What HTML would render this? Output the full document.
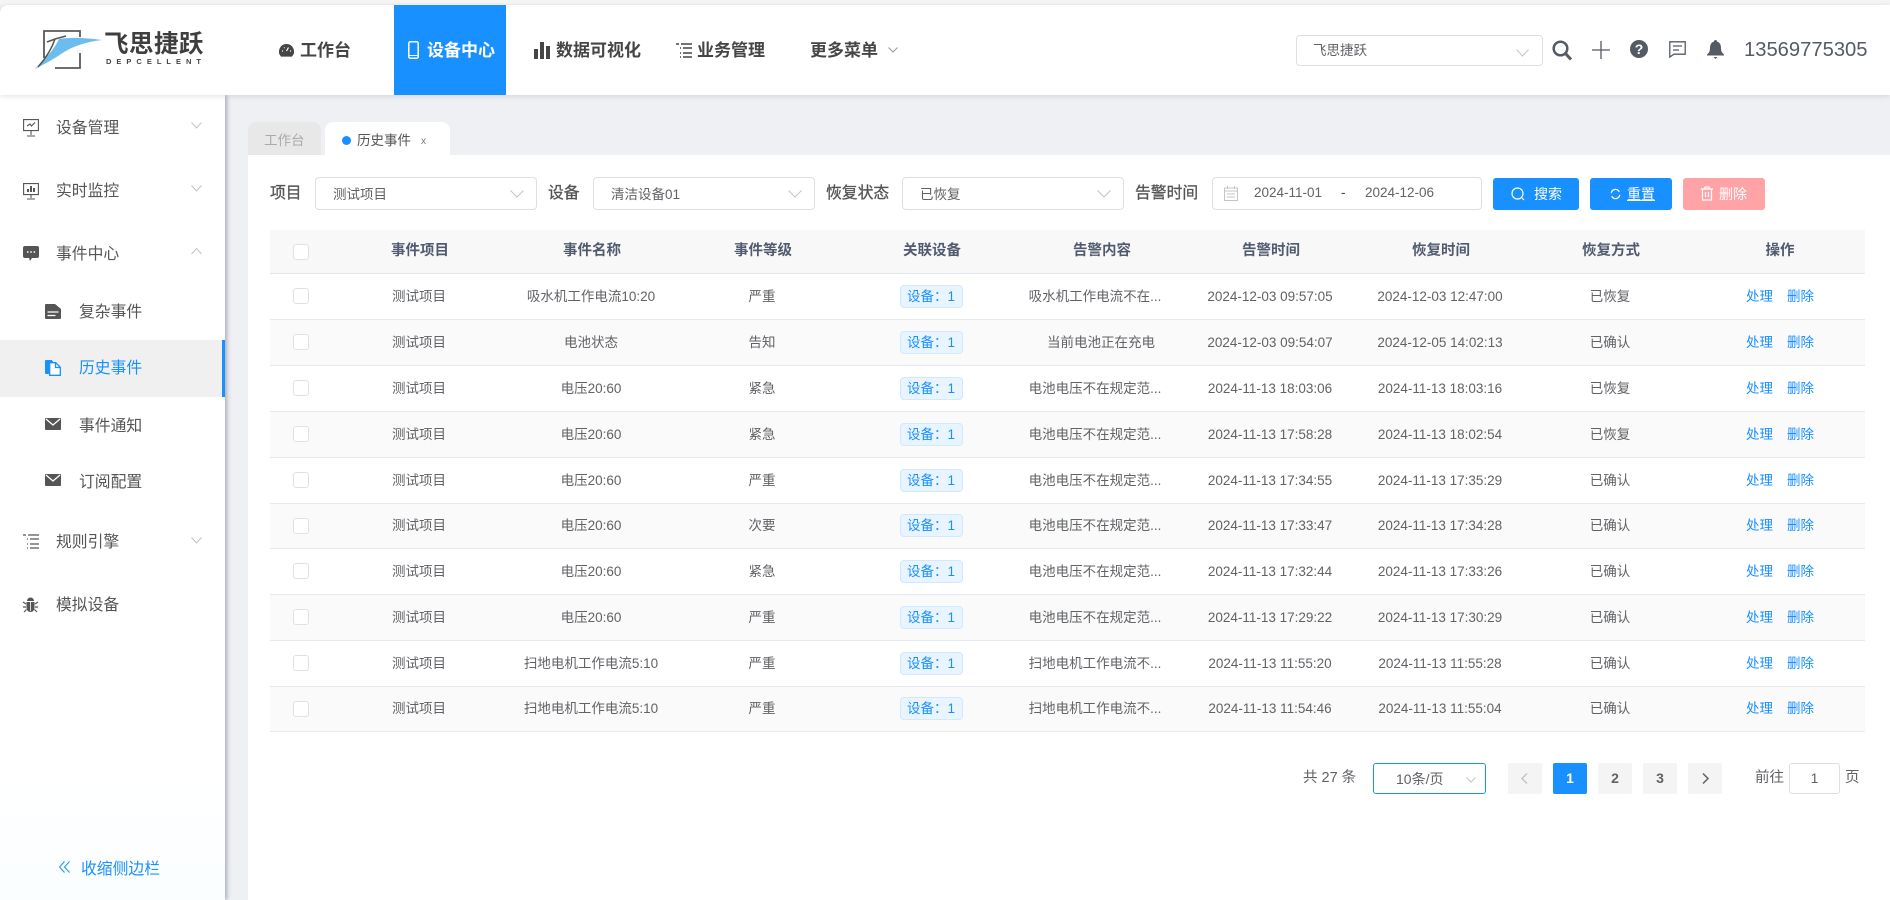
<!DOCTYPE html>
<html lang="zh"><head><meta charset="utf-8"><title>历史事件</title>
<style>
*{box-sizing:border-box}
html,body{margin:0;padding:0;width:1890px;height:900px;overflow:hidden;background:#eef0f4;font-family:"Liberation Sans","Noto Sans CJK SC",sans-serif;color:#606266}
.a{position:absolute}
.t{position:absolute;white-space:nowrap;line-height:1}
#strip{left:0;top:0;width:1890px;height:5px;background:#f5f5f5}
#hdr{left:0;top:5px;width:1890px;height:90px;background:#fff;box-shadow:0 1px 6px rgba(0,0,0,.12);border-radius:8px 0 0 0;z-index:3}
.nav{font-size:17px;font-weight:700;color:#454545;top:42px}
#side{left:0;top:95px;width:225px;height:805px;background:linear-gradient(#fff 85%,#fafeff);box-shadow:2px 0 4px rgba(90,95,115,.45);z-index:2}
.m{font-size:15.8px;color:#555}
#main{left:248px;top:155px;width:1642px;height:745px;background:#fff}
.lab{font-size:15.8px;font-weight:400;-webkit-text-stroke:.3px #555;color:#555;top:186px}
.sel{background:#fff;border:1px solid #dcdfe6;border-radius:4px;height:33px;top:177px}
.sel span{position:absolute;left:17px;top:9px;font-size:13.5px;line-height:15px;color:#606266;white-space:nowrap}
.btn{top:178px;height:32px;border-radius:3px;background:#1890ff;color:#fff;font-size:14px}
.btn span{position:absolute;top:9px;line-height:14px;white-space:nowrap}
.row{position:absolute;left:270px;width:1595px;height:46px;border-bottom:1px solid #e6e9f0;font-size:13.5px;color:#606266}
.row.g{background:#fafafa}
.row.h{background:#f8f8f9;font-weight:700;color:#515a6e;border-bottom-color:#e2e7ee;height:44px;top:230px;font-size:14.5px}
.row>b,.row>i{position:absolute;font-style:normal;font-weight:inherit;width:170px;text-align:center;top:0;line-height:46px;white-space:nowrap}
.row.s>i{line-height:44px}
.row.h>b{line-height:43px;margin-left:1px}
.ck{position:absolute;left:23px;top:14px;width:16px;height:16px;background:#fff;border:1px solid #dfe1e8;border-radius:3px}
.c2{left:64px}.c3{left:236px}.c4{left:407px}.c5{left:576px}.c6{left:746px}.c7{left:915px}.c8{left:1085px}.c9{left:1255px}.c10{left:1424px}
i.c6{left:740px}
i.c10{margin-left:1px}
.tag{display:inline-block;height:23px;line-height:21px;width:63px;background:#e8f4ff;border:1px solid #d1e9ff;border-radius:4px;color:#1890ff;vertical-align:middle;margin-top:-2px}
.lk{color:#1890ff;margin:0 7px;font-size:13.5px}
.pg{top:763px;width:34px;height:31px;background:#f4f4f5;border-radius:2px;text-align:center;line-height:31px;font-size:14px;font-weight:700;color:#606266}
.chev{position:absolute;fill:none;stroke:#c0c4cc;stroke-width:1}
svg{position:absolute;overflow:visible}
</style></head><body>
<div class="a" id="strip"></div>

<div class="a" id="hdr"></div>
<div style="position:absolute;left:0;top:0;width:1890px;height:95px;z-index:4">
 <svg style="left:33px;top:28px" width="72" height="44" viewBox="0 0 72 44">
  <path d="M11 30V3H47V9M47 25V40H22" fill="none" stroke="#5a5a5a" stroke-width="1.800"/>
  <path d="M2 41C10 32 20 24 26 11 38 9 55 10 69 12 52 14 38 19 28 26 18 33 9 37 2 41Z" fill="#6cbcee"/>
  <path d="M5 39C13 30 19 20 22 11L14 14M22 11L33 8" fill="none" stroke="#555" stroke-width="1.500"/>
 </svg>
 <span class="t" style="left:104px;top:33px;font-size:24.500px;font-weight:700;color:#3e3e3e;letter-spacing:.5px">飞思捷跃</span>
 <span class="t" style="left:106px;top:58px;font-size:7.500px;font-weight:700;color:#444;letter-spacing:5px">DEPCELLENT</span>

 <svg style="left:279px;top:44px" width="15" height="13" viewBox="0 0 15 13"><path d="M7.500 0A7.500 7.500 0 0 0 2 12.600h11A7.500 7.500 0 0 0 7.500 0Z" fill="#454545"/><path d="M7.500 7L9.500 3.500M3 7h1M11 7h1M5 3.500l.6.6" stroke="#fff" stroke-width="1.200"/></svg>
 <span class="t nav" style="left:300px">工作台</span>

 <div class="a" style="left:394px;top:5px;width:112px;height:90px;background:#1890ff"></div>
 <svg style="left:408px;top:41px" width="11" height="18" viewBox="0 0 11 18"><rect x=".8" y=".8" width="9.400" height="16.400" rx="1.500" fill="none" stroke="#fff" stroke-width="1.500"/><path d="M1 14.500h9" stroke="#fff"/></svg>
 <span class="t nav" style="left:427px;color:#fff">设备中心</span>

 <svg style="left:534px;top:42px" width="16" height="17" viewBox="0 0 16 17"><path d="M0 7h4v10H0zM6 0h4v17H6zM12 4h4v13h-4z" fill="#454545"/></svg>
 <span class="t nav" style="left:556px">数据可视化</span>

 <svg style="left:676px;top:43px" width="16" height="15" viewBox="0 0 16 15"><path d="M0 1h3M5 1h11M7 5h9M4 5h1M7 10h9M4 10h1M4 14h1M7 14h9" stroke="#454545" stroke-width="1.600" fill="none"/></svg>
 <span class="t nav" style="left:697px">业务管理</span>
 <span class="t nav" style="left:810px">更多菜单</span>
 <svg class="chev" style="left:888px;top:47px" width="10" height="6" viewBox="0 0 10 6"><path d="M.5.500L5 5 9.500.5" stroke="#999"/></svg>

 <div class="a sel" style="left:1296px;top:35px;width:247px;height:31px;background:#fff"><span style="left:16px;top:7px">飞思捷跃</span></div>
 <svg class="chev" style="left:1516px;top:49px" width="13" height="8" viewBox="0 0 13 8"><path d="M.5.500L6.500 7 12.500.5"/></svg>
 <svg style="left:1552px;top:40px" width="21" height="21" viewBox="0 0 21 21"><circle cx="8.500" cy="8.500" r="6.800" fill="none" stroke="#555b64" stroke-width="2.500"/><path d="M13.500 13.500l5.500 6" stroke="#555b64" stroke-width="3"/></svg>
 <svg style="left:1592px;top:41px" width="18" height="18" viewBox="0 0 18 18"><path d="M9 0v18M0 9h18" stroke="#555b64" stroke-width="1.300"/></svg>
 <svg style="left:1630px;top:40px" width="18" height="18" viewBox="0 0 18 18"><circle cx="9" cy="9" r="9" fill="#555b64"/><text x="9" y="14" font-size="14" font-weight="700" fill="#fff" text-anchor="middle" font-family="Liberation Sans">?</text></svg>
 <svg style="left:1669px;top:41px" width="17" height="17" viewBox="0 0 17 17"><path d="M.8.800h15.400v12.400H5L.8 16ZM4 5h9M4 9h6" fill="none" stroke="#555b64" stroke-width="1.300"/></svg>
 <svg style="left:1707px;top:40px" width="17" height="19" viewBox="0 0 17 19"><path d="M8.500 0c1 0 1.500.7 1.500 1.500 3 1 4 3.500 4 6.500 0 3 1 5 3 6.500v1H0v-1C2 13 3 11 3 8c0-3 1-5.500 4-6.500C7 .7 7.500 0 8.500 0ZM6.500 17h4l-2 2Z" fill="#555b64"/></svg>
 <span class="t" style="left:1744px;top:40px;font-size:20.200px;color:#555b64;line-height:20px">13569775305</span>
</div>

<div class="a" id="side">
 <svg style="left:23px;top:24px" width="16" height="18" viewBox="0 0 16 18"><path d="M.6.600h14.800v11H.6zM8 11.600V16M4 17h8M4 7l3-2 1.500 2L12 3.500" fill="none" stroke="#555" stroke-width="1.100"/></svg>
 <span class="t m" style="left:56px;top:26px">设备管理</span>
 <svg class="chev" style="left:191px;top:27px" width="11" height="7" viewBox="0 0 11 7"><path d="M.5.500L5.500 6 10.500.5"/></svg>

 <svg style="left:23px;top:88px" width="16" height="17" viewBox="0 0 16 17"><path d="M.6.600h14.800v11H.6zM8 11.600V15M4 16h8" fill="none" stroke="#555" stroke-width="1.100"/><path d="M4 9V6h2v3zM7 9V3h2v6zM10 9V5h2v4z" fill="#555"/></svg>
 <span class="t m" style="left:56px;top:89px">实时监控</span>
 <svg class="chev" style="left:191px;top:90px" width="11" height="7" viewBox="0 0 11 7"><path d="M.5.500L5.500 6 10.500.5"/></svg>

 <svg style="left:23px;top:151px" width="16" height="15" viewBox="0 0 16 15"><path d="M2 0h12a2 2 0 0 1 2 2v8a2 2 0 0 1-2 2H9l-2 3-1-3H2a2 2 0 0 1-2-2V2a2 2 0 0 1 2-2Z" fill="#555"/><path d="M4 6h1.500M7.300 6h1.500M10.600 6h1.500" stroke="#fff" stroke-width="1.600"/></svg>
 <span class="t m" style="left:56px;top:152px">事件中心</span>
 <svg class="chev" style="left:191px;top:153px" width="11" height="7" viewBox="0 0 11 7"><path d="M.5 6L5.500.5 10.500 6"/></svg>

 <svg style="left:45px;top:209px" width="16" height="15" viewBox="0 0 16 15"><path d="M1 0h9l6 5v9a1 1 0 0 1-1 1H1a1 1 0 0 1-1-1V1a1 1 0 0 1 1-1Z" fill="#555"/><path d="M2.500 8h11M2.500 11.500h8" stroke="#fff" stroke-width="1.300"/></svg>
 <span class="t m" style="left:79px;top:210px">复杂事件</span>

 <div class="a" style="left:0;top:245px;width:225px;height:57px;background:#f0f0f0"></div>
 <div class="a" style="left:222px;top:245px;width:3px;height:57px;background:#1890ff"></div>
 <svg style="left:45px;top:265px" width="16" height="16" viewBox="0 0 16 16"><path d="M0 1a1 1 0 0 1 1-1h6v2H4v12H1a1 1 0 0 1-1-1Z" fill="#1890ff"/><path d="M4.700 2.700h6l4.600 4.600v8h-10.600Z" fill="#fff" stroke="#1890ff" stroke-width="1.300"/><path d="M10.500 2.500V7.500H15.500" fill="none" stroke="#1890ff" stroke-width="1.300"/><path d="M2 1h6v2H2z" fill="#1890ff"/></svg>
 <span class="t m" style="left:79px;top:266px;color:#1890ff">历史事件</span>

 <svg style="left:45px;top:323px" width="16" height="12" viewBox="0 0 16 12"><path d="M1 0h14a1 1 0 0 1 1 1v10a1 1 0 0 1-1 1H1a1 1 0 0 1-1-1V1a1 1 0 0 1 1-1Z" fill="#555"/><path d="M1 1l7 6 7-6" fill="none" stroke="#fff" stroke-width="1.300"/></svg>
 <span class="t m" style="left:79px;top:324px">事件通知</span>

 <svg style="left:45px;top:379px" width="16" height="12" viewBox="0 0 16 12"><path d="M1 0h14a1 1 0 0 1 1 1v10a1 1 0 0 1-1 1H1a1 1 0 0 1-1-1V1a1 1 0 0 1 1-1Z" fill="#555"/><path d="M1 1l7 6 7-6" fill="none" stroke="#fff" stroke-width="1.300"/></svg>
 <span class="t m" style="left:79px;top:380px">订阅配置</span>

 <svg style="left:23px;top:439px" width="16" height="15" viewBox="0 0 16 15"><path d="M0 1h3M5 1h11M7 5h9M4 5h1M7 10h9M4 10h1M4 14h1M7 14h9" stroke="#555" stroke-width="1.300" fill="none"/></svg>
 <span class="t m" style="left:56px;top:440px">规则引擎</span>
 <svg class="chev" style="left:191px;top:442px" width="11" height="7" viewBox="0 0 11 7"><path d="M.5.500L5.500 6 10.500.5"/></svg>

 <svg style="left:23px;top:502px" width="15" height="15" viewBox="0 0 15 15"><path d="M4 4a3.500 3.500 0 0 1 7 0Z" fill="#555"/><path d="M3.500 5h8v6a4 4 0 0 1-8 0Z" fill="#555"/><path d="M0 5l3 2M15 5l-3 2M0 10h3M15 10h-3M1 15l2.500-2.500M14 15l-2.500-2.500" stroke="#555" stroke-width="1.200"/><path d="M7.500 5v9" stroke="#fff" stroke-width=".8"/></svg>
 <span class="t m" style="left:56px;top:503px">模拟设备</span>

 <svg style="left:59px;top:766px" width="11" height="12" viewBox="0 0 11 12" fill="none" stroke="#1890ff"><path d="M5.500.5L.5 6l5 5.500M10.500.5L5.500 6l5 5.500"/></svg>
 <span class="t" style="left:81px;top:767px;font-size:15.800px;color:#1890ff">收缩侧边栏</span>
</div>

<div class="a" style="left:248px;top:122px;width:73px;height:33px;background:#e8e8e8;border-radius:8px 8px 0 0"></div>
<span class="t" style="left:264px;top:134px;font-size:13.500px;color:#aaa">工作台</span>
<div class="a" style="left:325px;top:122px;width:125px;height:33px;background:#fff;border-radius:8px 8px 0 0"></div>
<div class="a" style="left:342px;top:136px;width:9px;height:9px;border-radius:50%;background:#1890ff"></div>
<span class="t" style="left:357px;top:134px;font-size:13.500px;color:#555">历史事件</span>
<span class="t" style="left:421px;top:137px;font-size:10px;color:#777">x</span>

<div class="a" id="main"></div>

<span class="t lab" style="left:270px">项目</span>
<div class="a sel" style="left:315px;width:222px"><span>测试项目</span></div>
<svg class="chev" style="left:510px;top:190px" width="14" height="8" viewBox="0 0 14 8"><path d="M.5.500L7 7 13.500.5"/></svg>
<span class="t lab" style="left:548px">设备</span>
<div class="a sel" style="left:593px;width:222px"><span>清洁设备01</span></div>
<svg class="chev" style="left:788px;top:190px" width="14" height="8" viewBox="0 0 14 8"><path d="M.5.500L7 7 13.500.5"/></svg>
<span class="t lab" style="left:826px">恢复状态</span>
<div class="a sel" style="left:902px;width:222px"><span>已恢复</span></div>
<svg class="chev" style="left:1097px;top:190px" width="14" height="8" viewBox="0 0 14 8"><path d="M.5.500L7 7 13.500.5"/></svg>
<span class="t lab" style="left:1135px">告警时间</span>
<div class="a sel" style="left:1212px;width:270px"></div>
<svg style="left:1224px;top:186px" width="14" height="15" viewBox="0 0 14 15" fill="none" stroke="#c0c4cc"><path d="M.5 2h13v12.500H.5zM.5 5h13M3.500 0v3M10.500 0v3M3 8h8M3 11h8"/></svg>
<span class="t" style="left:1254px;top:186px;font-size:13.500px;line-height:14px">2024-11-01</span>
<span class="t" style="left:1341px;top:186px;font-size:13.500px;line-height:14px;color:#444">-</span>
<span class="t" style="left:1365px;top:186px;font-size:13.500px;line-height:14px">2024-12-06</span>

<div class="a btn" style="left:1493px;width:86px"><svg style="left:18px;top:9px" width="14" height="14" viewBox="0 0 14 14" fill="none" stroke="#fff" stroke-width="1.200"><circle cx="6.500" cy="6.500" r="5.500"/><path d="M10.500 10.500l2.500 2.500"/></svg><span style="left:41px">搜索</span></div>
<div class="a btn" style="left:1590px;width:82px"><svg style="left:20px;top:10px" width="11" height="12" viewBox="0 0 13 14" fill="none" stroke="#fff" stroke-width="1.500"><path d="M1.500 6A5 5 0 0 1 10 3l1 1.500M11.500 8A5 5 0 0 1 3 11L2 9.500"/></svg><span style="left:37px;text-decoration:underline">重置</span></div>
<div class="a btn" style="left:1683px;width:82px;background:#ffa3a6"><svg style="left:18px;top:8px" width="12" height="15" viewBox="0 0 12 15" fill="none" stroke="#fff" stroke-width="1.200"><path d="M0 3h12M4 3V1h4v2M1.500 3v11h9V3M4.500 6v5M7.500 6v5"/></svg><span style="left:36px">删除</span></div>

<div class="row h"><div class="ck"></div><b class="c2">事件项目</b><b class="c3">事件名称</b><b class="c4">事件等级</b><b class="c5">关联设备</b><b class="c6">告警内容</b><b class="c7">告警时间</b><b class="c8">恢复时间</b><b class="c9">恢复方式</b><b class="c10">操作</b></div>

<div class="row" style="top:274px"><div class="ck"></div><i class="c2">测试项目</i><i class="c3">吸水机工作电流10:20</i><i class="c4">严重</i><i class="c5"><span class="tag">设备：1</span></i><i class="c6">吸水机工作电流不在...</i><i class="c7">2024-12-03 09:57:05</i><i class="c8">2024-12-03 12:47:00</i><i class="c9">已恢复</i><i class="c10"><span class="lk">处理</span><span class="lk">删除</span></i></div>
<div class="row g" style="top:320px"><div class="ck"></div><i class="c2">测试项目</i><i class="c3">电池状态</i><i class="c4">告知</i><i class="c5"><span class="tag">设备：1</span></i><i class="c6" style="left:746px">当前电池正在充电</i><i class="c7">2024-12-03 09:54:07</i><i class="c8">2024-12-05 14:02:13</i><i class="c9">已确认</i><i class="c10"><span class="lk">处理</span><span class="lk">删除</span></i></div>
<div class="row" style="top:366px"><div class="ck"></div><i class="c2">测试项目</i><i class="c3">电压20:60</i><i class="c4">紧急</i><i class="c5"><span class="tag">设备：1</span></i><i class="c6">电池电压不在规定范...</i><i class="c7">2024-11-13 18:03:06</i><i class="c8">2024-11-13 18:03:16</i><i class="c9">已恢复</i><i class="c10"><span class="lk">处理</span><span class="lk">删除</span></i></div>
<div class="row g" style="top:412px"><div class="ck"></div><i class="c2">测试项目</i><i class="c3">电压20:60</i><i class="c4">紧急</i><i class="c5"><span class="tag">设备：1</span></i><i class="c6">电池电压不在规定范...</i><i class="c7">2024-11-13 17:58:28</i><i class="c8">2024-11-13 18:02:54</i><i class="c9">已恢复</i><i class="c10"><span class="lk">处理</span><span class="lk">删除</span></i></div>
<div class="row" style="top:458px"><div class="ck"></div><i class="c2">测试项目</i><i class="c3">电压20:60</i><i class="c4">严重</i><i class="c5"><span class="tag">设备：1</span></i><i class="c6">电池电压不在规定范...</i><i class="c7">2024-11-13 17:34:55</i><i class="c8">2024-11-13 17:35:29</i><i class="c9">已确认</i><i class="c10"><span class="lk">处理</span><span class="lk">删除</span></i></div>
<div class="row g s" style="top:504px;height:45px"><div class="ck"></div><i class="c2">测试项目</i><i class="c3">电压20:60</i><i class="c4">次要</i><i class="c5"><span class="tag">设备：1</span></i><i class="c6">电池电压不在规定范...</i><i class="c7">2024-11-13 17:33:47</i><i class="c8">2024-11-13 17:34:28</i><i class="c9">已确认</i><i class="c10"><span class="lk">处理</span><span class="lk">删除</span></i></div>
<div class="row" style="top:549px"><div class="ck"></div><i class="c2">测试项目</i><i class="c3">电压20:60</i><i class="c4">紧急</i><i class="c5"><span class="tag">设备：1</span></i><i class="c6">电池电压不在规定范...</i><i class="c7">2024-11-13 17:32:44</i><i class="c8">2024-11-13 17:33:26</i><i class="c9">已确认</i><i class="c10"><span class="lk">处理</span><span class="lk">删除</span></i></div>
<div class="row g" style="top:595px"><div class="ck"></div><i class="c2">测试项目</i><i class="c3">电压20:60</i><i class="c4">严重</i><i class="c5"><span class="tag">设备：1</span></i><i class="c6">电池电压不在规定范...</i><i class="c7">2024-11-13 17:29:22</i><i class="c8">2024-11-13 17:30:29</i><i class="c9">已确认</i><i class="c10"><span class="lk">处理</span><span class="lk">删除</span></i></div>
<div class="row" style="top:641px"><div class="ck"></div><i class="c2">测试项目</i><i class="c3">扫地电机工作电流5:10</i><i class="c4">严重</i><i class="c5"><span class="tag">设备：1</span></i><i class="c6">扫地电机工作电流不...</i><i class="c7">2024-11-13 11:55:20</i><i class="c8">2024-11-13 11:55:28</i><i class="c9">已确认</i><i class="c10"><span class="lk">处理</span><span class="lk">删除</span></i></div>
<div class="row g s" style="top:687px;height:45px"><div class="ck"></div><i class="c2">测试项目</i><i class="c3">扫地电机工作电流5:10</i><i class="c4">严重</i><i class="c5"><span class="tag">设备：1</span></i><i class="c6">扫地电机工作电流不...</i><i class="c7">2024-11-13 11:54:46</i><i class="c8">2024-11-13 11:55:04</i><i class="c9">已确认</i><i class="c10"><span class="lk">处理</span><span class="lk">删除</span></i></div>

<span class="t" style="left:1303px;top:771px;font-size:14.500px">共 27 条</span>
<div class="a" style="left:1373px;top:763px;width:113px;height:31px;border:1px solid #1890ff;border-radius:3px;background:#fff"></div>
<span class="t" style="left:1396px;top:772px;font-size:14px">10条/页</span>
<svg class="chev" style="left:1466px;top:777px" width="10" height="6" viewBox="0 0 10 6"><path d="M.5.500L5 5 9.500.5"/></svg>
<div class="a pg" style="left:1508px"><svg style="left:13px;top:10px" width="7" height="11" viewBox="0 0 7 11" fill="none" stroke="#c0c4cc" stroke-width="1.500"><path d="M6 .5L1 5.500 6 10.500"/></svg></div>
<div class="a pg" style="left:1553px;background:#1890ff;color:#fff">1</div>
<div class="a pg" style="left:1598px">2</div>
<div class="a pg" style="left:1643px">3</div>
<div class="a pg" style="left:1688px"><svg style="left:14px;top:10px" width="7" height="11" viewBox="0 0 7 11" fill="none" stroke="#606266" stroke-width="1.500"><path d="M1 .5L6 5.500 1 10.500"/></svg></div>
<span class="t" style="left:1755px;top:771px;font-size:14.500px">前往</span>
<div class="a" style="left:1789px;top:763px;width:51px;height:31px;border:1px solid #dcdfe6;border-radius:3px;background:#fff;text-align:center;line-height:29px;font-size:14px">1</div>
<span class="t" style="left:1845px;top:771px;font-size:14.500px">页</span>
</body></html>
